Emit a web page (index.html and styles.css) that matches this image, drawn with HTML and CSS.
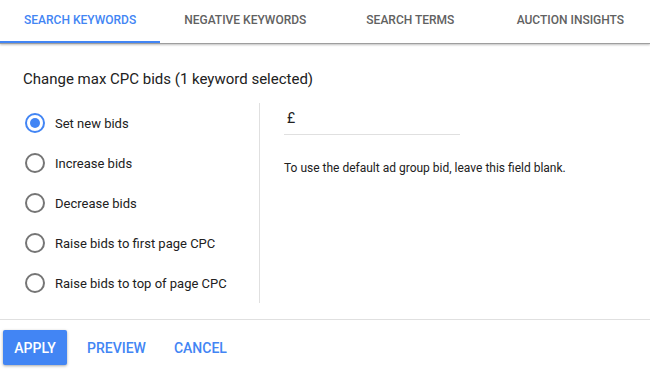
FILE: index.html
```html
<!DOCTYPE html>
<html lang="en">
<head>
    <meta charset="UTF-8">
    <title>Change max CPC bids</title>
    <link rel="stylesheet" href="styles.css">
</head>
<body>

    <!-- Tabs -->
    <div class="tabs">
        <div class="tab active">Search keywords</div>
        <div class="tab">Negative keywords</div>
        <div class="tab">Search terms</div>
        <div class="tab">Auction insights</div>
    </div>

    <div class="panel">
        <div class="panel-title">Change max CPC bids (1 keyword selected)</div>

        <div class="panel-body">
            <!-- Bid options -->
            <div class="options">
                <label class="option"><span class="radio checked"></span>Set new bids</label>
                <label class="option"><span class="radio"></span>Increase bids</label>
                <label class="option"><span class="radio"></span>Decrease bids</label>
                <label class="option"><span class="radio"></span>Raise bids to first page CPC</label>
                <label class="option"><span class="radio"></span>Raise bids to top of page CPC</label>
            </div>

            <!-- Bid input -->
            <div class="bid-field">
                <div class="money-input">£</div>
                <div class="hint">To use the default ad group bid, leave this field blank.</div>
            </div>
        </div>
    </div>

    <!-- Actions -->
    <div class="actions">
        <button class="btn primary">Apply</button>
        <button class="btn">Preview</button>
        <button class="btn">Cancel</button>
    </div>

</body>
</html>
```

FILE: styles.css
```css
body {
    margin: 0;
    font-family: Roboto, "Liberation Sans", sans-serif;
    background: #fff;
    color: #212121;
    width: 650px;
    overflow: hidden;
}
.tabs {
    display: flex;
    height: 43px;
    border-bottom: 1px solid #9e9e9e;
    box-shadow: 0 1px 2px rgba(0, 0, 0, 0.25);
}
.tab {
    min-width: 160px;
    box-sizing: border-box;
    padding: 0 24px;
    flex-shrink: 0;
    display: flex;
    align-items: center;
    justify-content: center;
    font-size: 12px;
    font-weight: 500;
    text-transform: uppercase;
    color: #616161;
    padding-bottom: 3px;
}
.tab.active {
    color: #4285f4;
    border-bottom: 2px solid #4285f4;
    padding-bottom: 1px;
}
.panel {
    padding: 26px 0 0 23px;
}
.panel-title {
    font-size: 15px;
    color: #212121;
    height: 20px;
}
.panel-body {
    display: flex;
    margin-top: 13px;
}
.options {
    width: 236px;
    border-right: 1px solid #e0e0e0;
}
.option {
    display: flex;
    align-items: center;
    height: 40px;
    font-size: 13px;
    color: #212121;
}
.radio {
    width: 16px;
    height: 16px;
    border: 2px solid #757575;
    border-radius: 50%;
    margin: 0 10px 0 2px;
    display: flex;
    align-items: center;
    justify-content: center;
}
.radio.checked {
    border-color: #4285f4;
}
.radio.checked::after {
    content: "";
    width: 10px;
    height: 10px;
    border-radius: 50%;
    background: #4285f4;
}
.bid-field {
    padding-left: 24px;
}
.money-input {
    width: 176px;
    height: 32px;
    box-sizing: border-box;
    border-bottom: 1px solid #e0e0e0;
    font-size: 14px;
    padding: 7px 0 0 3px;
}
.hint {
    font-size: 12px;
    color: #212121;
    margin-top: 26px;
}
.actions {
    border-top: 1px solid #e0e0e0;
    margin-top: 16px;
    padding: 10px 3px;
    display: flex;
    align-items: center;
}
.btn {
    font-family: Roboto, "Liberation Sans", sans-serif;
    font-size: 14px;
    font-weight: 500;
    text-transform: uppercase;
    color: #4285f4;
    background: none;
    border: none;
    height: 35px;
    padding: 0 14px;
    border-radius: 2px;
}
.btn.primary {
    background: #4285f4;
    color: #fff;
    width: 64px;
    padding: 0;
    margin-right: 6px;
    box-shadow: 0 1px 3px rgba(0, 0, 0, 0.35);
}
```
